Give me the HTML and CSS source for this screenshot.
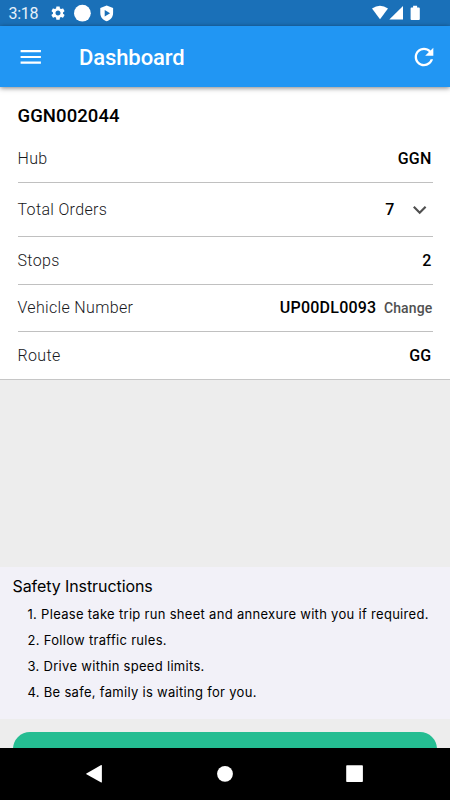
FILE: index.html
```html
<!DOCTYPE html>
<html lang="en">
<head>
<meta charset="utf-8">
<title>Dashboard</title>
<link rel="stylesheet" href="styles.css">
</head>
<body>
<div class="screen">
  <div class="status">
    <span class="clock">3:18</span>
    <svg class="status-left" width="66" height="20" viewBox="0 0 66 20" fill="#fff">
      <g transform="translate(-.4 1.7) scale(.7)"><path d="M19.14 12.94c.04-.3.06-.61.06-.94 0-.32-.02-.64-.07-.94l2.03-1.58c.18-.14.23-.41.12-.61l-1.92-3.32c-.12-.22-.37-.29-.59-.22l-2.39.96c-.5-.38-1.03-.7-1.62-.94l-.36-2.54c-.04-.24-.24-.41-.48-.41h-3.84c-.24 0-.43.17-.47.41l-.36 2.54c-.59.24-1.13.57-1.62.94l-2.39-.96c-.22-.08-.47 0-.59.22L2.74 8.87c-.12.21-.08.47.12.61l2.03 1.58c-.05.3-.09.63-.09.94s.02.64.07.94l-2.03 1.58c-.18.14-.23.41-.12.61l1.92 3.32c.12.22.37.29.59.22l2.39-.96c.5.38 1.03.7 1.62.94l.36 2.54c.05.24.24.41.48.41h3.84c.24 0 .44-.17.47-.41l.36-2.54c.59-.24 1.13-.56 1.62-.94l2.39.96c.22.08.47 0 .59-.22l1.92-3.32c.12-.22.07-.47-.12-.61zM12 15.6c-1.98 0-3.6-1.62-3.6-3.6s1.62-3.6 3.6-3.6 3.6 1.62 3.6 3.6-1.62 3.6-3.6 3.6z"/></g>
      <circle cx="32.4" cy="10.2" r="8.4"/>
      <path fill-rule="evenodd" d="M56.7 2.5 63.1 5v4.7c0 4.6-2.7 7.3-6.4 8.6-3.7-1.3-6.4-4-6.4-8.6V5zM54.7 7v6.6l5.4-3.3z"/>
    </svg>
    <svg class="status-right" width="50" height="20" viewBox="0 0 50 20" fill="#fff">
      <path d="M0 5.6Q8-.2 16 5.6L8 16.3z"/>
      <path d="M31 3v13.6H17.3z"/>
      <path d="M41.1 2.8h4v1.7h1.8q.9 0 .9.9v10.7q0 .9-.9.9h-7.4q-.9 0-.9-.9V5.4q0-.9.9-.9h1.6z"/>
    </svg>
  </div>
  <header class="appbar">
    <svg width="22" height="16" viewBox="0 0 22 16" fill="#fff"><path d="M.6 1h20.3v2.2H.6zM.6 6.9h20.3v2.2H.6zM.6 12.5h20.3v2.2H.6z"/></svg>
    <h1>Dashboard</h1>
    <svg class="refresh" width="28" height="28" viewBox="0 0 24 24" fill="#fff"><path d="M17.65 6.35C16.2 4.9 14.21 4 12 4c-4.42 0-7.99 3.58-7.99 8s3.57 8 7.99 8c3.73 0 6.84-2.55 7.73-6h-2.08c-.82 2.33-3.04 4-5.65 4-3.31 0-6-2.69-6-6s2.69-6 6-6c1.66 0 3.14.69 4.22 1.78L13 11h7V4l-2.35 2.35z"/></svg>
  </header>
  <main class="content">
    <section class="card">
      <h2>GGN002044</h2>
      <div class="row hub"><span>Hub</span><b>GGN</b></div>
      <div class="row orders"><span>Total Orders</span><b>7</b>
        <svg width="14" height="10" viewBox="0 0 14 10" fill="none" stroke="#505050" stroke-width="2.2"><path d="m.8 1.8 5.9 5.9 5.9-5.9"/></svg></div>
      <div class="row stops"><span>Stops</span><b>2</b></div>
      <div class="row"><span>Vehicle Number</span><b class="vehicle">UP00DL0093</b><a class="change">Change</a></div>
      <div class="row last"><span>Route</span><b>GG</b></div>
    </section>
    <section class="safety">
      <h3>Safety Instructions</h3>
      <p>1. Please take trip run sheet and annexure with you if required.</p>
      <p>2. Follow traffic rules.</p>
      <p>3. Drive within speed limits.</p>
      <p>4. Be safe, family is waiting for you.</p>
    </section>
    <div class="button"></div>
  </main>
  <nav class="nav">
    <svg width="450" height="52" viewBox="0 0 450 52" fill="#fff">
      <path d="M86.4 25.6 101.2 17q.7-.3.7.4v16.7q0 .7-.7.4L86.4 26.2q-.5-.3 0-.6z"/>
      <circle cx="225" cy="25.8" r="7.9"/>
      <rect x="346.2" y="17.3" width="16.7" height="16.7" rx=".8"/>
    </svg>
  </nav>
</div>
</body>
</html>
```
FILE: styles.css
```css
* { box-sizing: border-box; margin: 0; padding: 0; }
body { font-family: Roboto, "Liberation Sans", sans-serif; color: #000; }
svg { display: block; flex: none; }
.screen { display: flex; flex-direction: column; width: 450px; height: 800px; overflow: hidden; background: #ededed; }
.status { display: flex; height: 26px; flex: none; background: #1a70b8; padding: 3px 29px 0 8.5px; }
.clock { width: 41.5px; font-size: 16px; line-height: 22px; color: #e6f1fa; letter-spacing: -.25px; }
.status-right { margin-left: auto; margin-right: -1px; }
.appbar { display: flex; align-items: center; height: 61px; flex: none; padding: 0 12px 0 20px; background: #2196f3; color: #fff; box-shadow: 0 1px 5px rgba(0,0,0,.5); z-index: 1; }
.appbar h1 { margin: 2px 0 0 37px; font-size: 22px; font-weight: 500; line-height: 26px; letter-spacing: -.1px; }
.refresh { margin-left: auto; }
.content { display: flex; flex-direction: column; flex: 1; min-height: 0; overflow: hidden; }
.card { flex: none; height: 293px; background: #fff; padding: 17px 17.5px 0; border-bottom: 1px solid #c6c6c6; }
.card h2 { height: 30px; font-size: 18.5px; line-height: 24px; font-weight: 500; letter-spacing: .08px; }
.row { display: flex; align-items: center; height: 47.6px; border-bottom: 1px solid #c0c0c0; font-size: 16px; line-height: 20px; }
.row span { margin-right: auto; color: #18181c; letter-spacing: .33px; font-weight: 300; }
.row b { padding-right: 1px; font-weight: 500; letter-spacing: .22px; }
.row svg { margin: 0 6px 0 17px; }
.hub { height: 49px; padding-top: 2px; }
.orders { height: 54px; }
.stops { padding-top: 2px; }
.last { border: 0; }
.row .vehicle { padding-right: 0; }
.change { margin-left: 7.5px; font-size: 14px; font-weight: 500; color: #505050; letter-spacing: .15px; }
.safety { height: 152px; flex: none; margin-top: 187px; padding: 8px 12.5px; background: #f2f1f8; font-family: Inter, sans-serif; }
.safety h3 { font-size: 16px; line-height: 22px; font-weight: 400; margin-bottom: 4px; letter-spacing: -.08px; }
.safety p { padding-left: 15px; font-size: 13px; line-height: 26px; white-space: nowrap; letter-spacing: .3px; }
.button { flex: none; height: 50px; margin: 13px 13px 0; background: #25bd92; border-radius: 17px; }
.nav { height: 52px; flex: none; background: #000; }
```
